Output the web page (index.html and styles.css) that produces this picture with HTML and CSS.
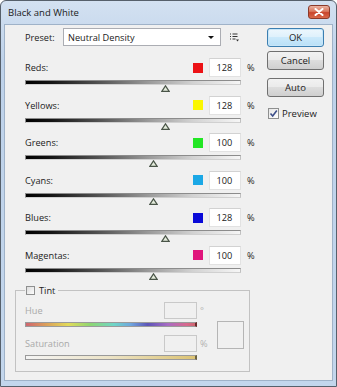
FILE: index.html
```html
<!DOCTYPE html>
<html>
<head>
<meta charset="utf-8">
<link rel="stylesheet" href="styles.css">
</head>
<body>
<div class="window">
  <div class="titlebar">
    <span class="title">Black and White</span>
    <span class="close"><svg width="10" height="8" viewBox="0 0 10 8"><path d="M1.5 1 L8.5 7 M8.5 1 L1.5 7" stroke="#fff" stroke-width="2" stroke-linecap="round"/></svg></span>
  </div>
  <div class="client">
    <div class="main">
      <div class="preset">
        <span class="lbl">Preset:</span>
        <div class="select"><span>Neutral Density</span><span class="caret"></span></div>
        <svg class="menu-ico" width="9" height="9" viewBox="0 0 9 9"><path d="M0 1h1M0 3.5h1M0 6h1" stroke="#333" stroke-width="1.2"/><path d="M2.5 1h5M2.5 3.5h5M2.5 6h3" stroke="#333" stroke-width="1"/><path d="M6 6.5h3l-1.5 2z" fill="#333"/></svg>
      </div>
      <div class="sliders">
        <div class="srow">
          <div class="sline"><span class="lbl">Reds:</span><span class="swatch sw-red"></span><span class="num">128</span><span class="pct">%</span></div>
          <div class="track"><svg class="thumb" style="left:65.6%" width="9" height="7" viewBox="0 0 9 7"><path d="M4.5 0.8 L8.2 6.3 L0.8 6.3 Z" fill="#e4ecdc" stroke="#4a5548" stroke-width="1.2"/></svg></div>
        </div>
        <div class="srow">
          <div class="sline"><span class="lbl">Yellows:</span><span class="swatch sw-yellow"></span><span class="num">128</span><span class="pct">%</span></div>
          <div class="track"><svg class="thumb" style="left:65.6%" width="9" height="7" viewBox="0 0 9 7"><path d="M4.5 0.8 L8.2 6.3 L0.8 6.3 Z" fill="#e4ecdc" stroke="#4a5548" stroke-width="1.2"/></svg></div>
        </div>
        <div class="srow">
          <div class="sline"><span class="lbl">Greens:</span><span class="swatch sw-green"></span><span class="num">100</span><span class="pct">%</span></div>
          <div class="track"><svg class="thumb" style="left:60%" width="9" height="7" viewBox="0 0 9 7"><path d="M4.5 0.8 L8.2 6.3 L0.8 6.3 Z" fill="#e4ecdc" stroke="#4a5548" stroke-width="1.2"/></svg></div>
        </div>
        <div class="srow">
          <div class="sline"><span class="lbl">Cyans:</span><span class="swatch sw-cyan"></span><span class="num">100</span><span class="pct">%</span></div>
          <div class="track"><svg class="thumb" style="left:60%" width="9" height="7" viewBox="0 0 9 7"><path d="M4.5 0.8 L8.2 6.3 L0.8 6.3 Z" fill="#e4ecdc" stroke="#4a5548" stroke-width="1.2"/></svg></div>
        </div>
        <div class="srow">
          <div class="sline"><span class="lbl">Blues:</span><span class="swatch sw-blue"></span><span class="num">128</span><span class="pct">%</span></div>
          <div class="track"><svg class="thumb" style="left:65.6%" width="9" height="7" viewBox="0 0 9 7"><path d="M4.5 0.8 L8.2 6.3 L0.8 6.3 Z" fill="#e4ecdc" stroke="#4a5548" stroke-width="1.2"/></svg></div>
        </div>
        <div class="srow">
          <div class="sline"><span class="lbl">Magentas:</span><span class="swatch sw-magenta"></span><span class="num">100</span><span class="pct">%</span></div>
          <div class="track"><svg class="thumb" style="left:60%" width="9" height="7" viewBox="0 0 9 7"><path d="M4.5 0.8 L8.2 6.3 L0.8 6.3 Z" fill="#e4ecdc" stroke="#4a5548" stroke-width="1.2"/></svg></div>
        </div>
      </div>
      <fieldset class="tint">
        <legend class="tint-legend"><span class="cb"></span><span>Tint</span></legend>
        <div class="tint-body">
          <div class="tint-ctrl">
            <div class="tline"><span class="dlbl">Hue</span><span class="dnum"></span><span class="unit">°</span></div>
            <div class="bar hue-bar"></div>
            <div class="tline sat-line"><span class="dlbl">Saturation</span><span class="dnum"></span><span class="unit">%</span></div>
            <div class="bar sat-bar"></div>
          </div>
          <div class="color-preview"></div>
        </div>
      </fieldset>
    </div>
    <div class="side">
      <div class="btn ok">OK</div>
      <div class="btn cancel">Cancel</div>
      <div class="btn auto">Auto</div>
      <div class="preview-row">
        <span class="cb cb-checked"><svg width="9" height="9" viewBox="0 0 9 9"><path d="M1.5 4.5 L3.7 7 L7.8 1.5" fill="none" stroke="#3d4f8a" stroke-width="1.6"/></svg></span>
        <span>Preview</span>
      </div>
    </div>
  </div>
</div>
</body>
</html>
```
FILE: styles.css
```css
* { box-sizing: border-box; }
html, body { margin: 0; padding: 0; }
body {
  width: 337px;
  height: 387px;
  overflow: hidden;
  background: #ffffff;
  font-family: "Open Sans", "Liberation Sans", sans-serif;
  font-size: 9.2px;
  color: #222222;
}
.window {
  width: 337px;
  height: 387px;
  display: flex;
  flex-direction: column;
  background: linear-gradient(#d3e1f1, #bed2ea 60px, #c3d6ec);
  border: 1px solid #56606b;
  border-radius: 6px 6px 0 0;
  padding: 0 3px 5px 3px;
}
.titlebar {
  height: 23px;
  display: flex;
  align-items: flex-start;
  justify-content: space-between;
  padding-left: 4px;
}
.title {
  margin-top: 5px;
  font-size: 9.5px;
  color: #1a1a1a;
}
.close {
  margin-top: 4px;
  margin-right: 3px;
  width: 22px;
  height: 14px;
  border: 1px solid #8b3a2a;
  border-radius: 3px;
  background: linear-gradient(#eab3a2, #d9765c 45%, #c9452c 55%, #d9694a);
  display: flex;
  align-items: center;
  justify-content: center;
}
.client {
  flex: 1;
  background: #f0f0f0;
  border: 1px solid #9fb2c8;
  display: flex;
  gap: 11px;
  padding: 3px 8px 0 10px;
}
.main {
  width: 241px;
  display: flex;
  flex-direction: column;
}
.side {
  width: 57px;
  display: flex;
  flex-direction: column;
}
.preset {
  display: flex;
  align-items: center;
  height: 18px;
  padding-left: 10px;
}
.preset .lbl { width: 38px; }
.select {
  width: 158px;
  height: 18px;
  background: #ffffff;
  border: 1px solid #abadb3;
  display: flex;
  align-items: center;
  justify-content: space-between;
  padding: 0 6px 0 4px;
}
.caret {
  width: 0;
  height: 0;
  border-top: 3px solid #111;
  border-left: 3px solid transparent;
  border-right: 3px solid transparent;
}
.menu-ico { margin-left: 9px; }
.sliders { margin-top: 12px; }
.srow {
  height: 37.5px;
  padding-left: 10px;
}
.sline {
  display: flex;
  align-items: center;
  height: 19px;
}
.sline .lbl { flex: 1; }
.swatch {
  width: 10px;
  height: 10px;
  margin-right: 6px;
}
.sw-red { background: #ec1216; }
.sw-yellow { background: #fbf700; }
.sw-green { background: #22e624; }
.sw-cyan { background: #1ba8e6; }
.sw-blue { background: #0a0ad8; }
.sw-magenta { background: #e0167c; }
.num {
  width: 32px;
  height: 19px;
  background: #ffffff;
  border: 1px solid #e2e2e2;
  border-top-color: #d2d2d2;
  display: flex;
  align-items: center;
  justify-content: center;
  padding-right: 1px;
}
.pct {
  width: 9px;
  margin-left: 6px;
}
.track {
  position: relative;
  margin-top: 3px;
  width: 216px;
  height: 5px;
  border: 1px solid #8c8c8c;
  border-bottom-color: #d0d0d0;
  border-right-color: #c0c0c0;
  background: linear-gradient(90deg, #000 0%, #151515 12%, #555 35%, #9c9c9c 58%, #d2d2d2 78%, #f6f6f6 100%);
}
.thumb {
  position: absolute;
  top: 4px;
  margin-left: -5px;
}
.tint {
  margin: 0;
  width: 235px;
  border: 1px solid #c2c2c2;
  padding: 5px 5px 11px 9px;
  min-width: 0;
}
.tint-legend {
  display: flex;
  align-items: center;
  height: 14px;
  padding: 0 3px 0 1px;
  gap: 4px;
}
.cb {
  width: 9px;
  height: 9px;
  border: 1px solid #8e8f8f;
  background: linear-gradient(135deg, #dcdcdc, #fdfdfd);
  display: inline-flex;
  align-items: center;
  justify-content: center;
}
.tint-body {
  display: flex;
  gap: 8px;
}
.tint-ctrl {
  width: 184px;
  display: flex;
  flex-direction: column;
}
.tline {
  display: flex;
  align-items: center;
  height: 17px;
  color: #a9a9a9;
}
.sat-line { margin-top: 8px; }
.dlbl { flex: 1; }
.dnum {
  width: 33px;
  height: 17px;
  border: 1px solid #c9c9c9;
  background: #f0f0f0;
}
.unit {
  width: 12px;
  padding-left: 3px;
  color: #b0b0b0;
}
.bar {
  margin-top: 3px;
  width: 172px;
  height: 5px;
  border: 1px solid #9a9a9a;
  border-right: 2px solid #6a2a2a;
}
.hue-bar {
  background: linear-gradient(90deg, #cf6670 0%, #dba05a 12%, #e2db5a 25%, #8ed672 38%, #6fd6c8 52%, #6fa6de 62%, #5d55b8 72%, #a86cc4 84%, #d86a8e 95%, #cf6670 100%);
}
.sat-bar {
  height: 5px;
  border-right-color: #6b6240;
  background: linear-gradient(90deg, #f4f4f4 0%, #ece3c6 50%, #dcc373 100%);
}
.color-preview {
  margin-top: 19px;
  width: 27px;
  height: 28px;
  border: 1px solid #b5b5b5;
  background: #f0f0f0;
}
.btn {
  height: 19px;
  border: 1px solid #707070;
  border-radius: 3px;
  background: linear-gradient(#f2f2f2 0%, #ebebeb 45%, #dddddd 50%, #cfcfcf 100%);
  display: flex;
  align-items: center;
  justify-content: center;
  font-size: 9.5px;
}
.btn.ok {
  border-color: #3c7fb1;
  background: linear-gradient(#edf7fd 0%, #dff1fc 45%, #cbe9fb 50%, #b9e0f7 100%);
  box-shadow: inset 0 0 0 1px #c8e6f8;
}
.btn.cancel { margin-top: 4px; }
.btn.auto { margin-top: 8px; }
.preview-row {
  margin-top: 9px;
  height: 14px;
  display: flex;
  align-items: center;
  gap: 3px;
  padding-left: 1px;
  font-size: 9.5px;
}
.cb-checked {
  width: 11px;
  height: 11px;
  background: linear-gradient(135deg, #e6e6e6, #ffffff);
}
```
